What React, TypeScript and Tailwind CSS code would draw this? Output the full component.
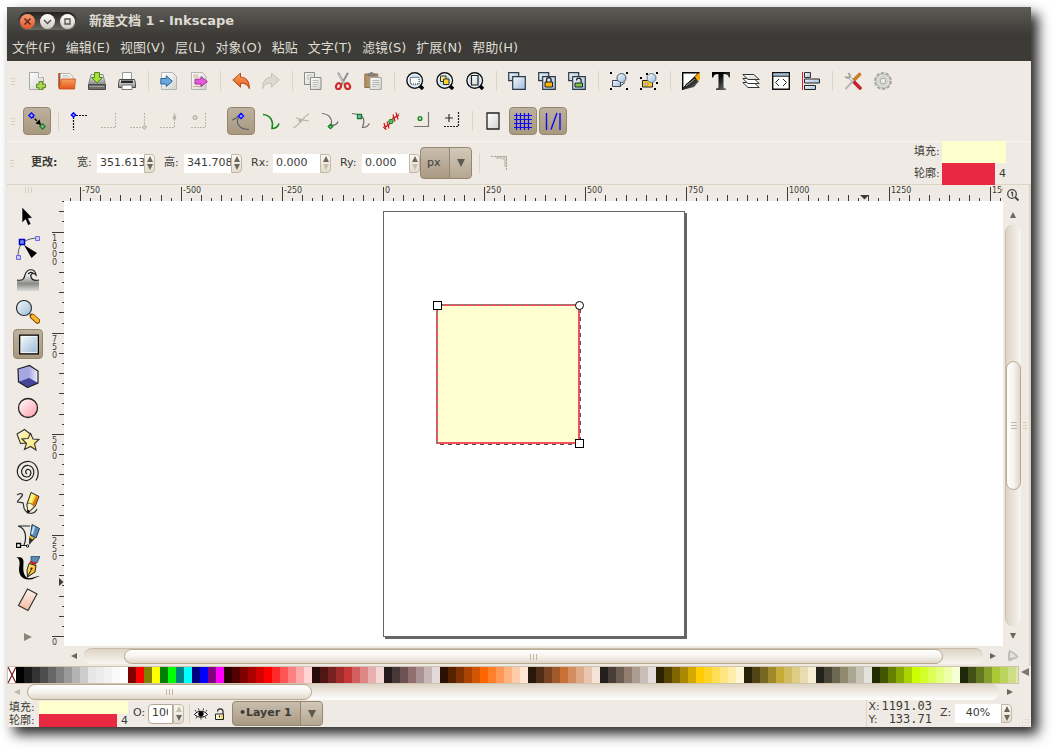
import type { ReactNode } from "react";
import clsx from "clsx";

type Tool = { label: string; icon: ReactNode; active?: boolean };
type ToolItem = Tool | "line" | "space";

/* shared fills for the icons */
function Gradients() {
  return (
    <svg className="absolute size-0" aria-hidden="true">
      <defs>
        <linearGradient id="blue" x1="0" y1="0" x2="1" y2="1">
          <stop offset="0" stopColor="#f4f8fc" />
          <stop offset="1" stopColor="#9dbcd9" />
        </linearGradient>
        <linearGradient id="paper" x1="0" y1="0" x2="1" y2="1">
          <stop offset="0" stopColor="#ffffff" />
          <stop offset="1" stopColor="#d2d2ce" />
        </linearGradient>
        <linearGradient id="orange" x1="0" y1="0" x2="0" y2="1">
          <stop offset="0" stopColor="#f9a15c" />
          <stop offset="1" stopColor="#e2571c" />
        </linearGradient>
        <linearGradient id="grey" x1="0" y1="0" x2="0" y2="1">
          <stop offset="0" stopColor="#f2f2f0" />
          <stop offset="1" stopColor="#8a8a88" />
        </linearGradient>
        <linearGradient id="wave" x1="0" y1="0" x2="0" y2="1">
          <stop offset="0.2" stopColor="#f2f2f0" />
          <stop offset="0.65" stopColor="#8a8a88" />
          <stop offset="1" stopColor="#dcdcda" />
        </linearGradient>
        <linearGradient id="gold" x1="0" y1="0" x2="1" y2="1">
          <stop offset="0" stopColor="#fff27a" />
          <stop offset="1" stopColor="#f59b00" />
        </linearGradient>
        <linearGradient id="yellow" x1="0" y1="0" x2="1" y2="1">
          <stop offset="0" stopColor="#fffef0" />
          <stop offset="1" stopColor="#fbe04e" />
        </linearGradient>
        <linearGradient id="pink" x1="0" y1="0" x2="1" y2="1">
          <stop offset="0.1" stopColor="#fff6f6" />
          <stop offset="1" stopColor="#ff9aa8" />
        </linearGradient>
        <linearGradient id="peach" x1="0" y1="0" x2="0" y2="1">
          <stop offset="0" stopColor="#fdf3ee" />
          <stop offset="1" stopColor="#f5b8a0" />
        </linearGradient>
        <linearGradient id="violet" x1="0" y1="0" x2="1" y2="0">
          <stop offset="0" stopColor="#a9a9e0" />
          <stop offset="1" stopColor="#f0f0ff" />
        </linearGradient>
        <linearGradient id="ink" x1="0" y1="0" x2="1" y2="1">
          <stop offset="0.3" stopColor="#000000" />
          <stop offset="1" stopColor="#888888" />
        </linearGradient>
      </defs>
    </svg>
  );
}

function Icon({ children }: { children: ReactNode }) {
  return (
    <svg viewBox="0 0 18 18" className="size-[18px]" fill="none" aria-hidden="true">
      {children}
    </svg>
  );
}

function BigIcon({ children }: { children: ReactNode }) {
  return (
    <svg viewBox="0 0 24 24" className="size-6" fill="none" aria-hidden="true">
      {children}
    </svg>
  );
}

function Lens({ children }: { children: ReactNode }) {
  return (
    <Icon>
      <path d="M13 13l4 4" stroke="#000" strokeWidth="3.500" />
      <circle cx="8.700" cy="8.500" r="7.800" fill="#c5dcf0" stroke="#111" strokeWidth="1.400" />
      <circle cx="8.700" cy="8.500" r="6.400" stroke="#fff" strokeWidth="0.800" />
      {children}
    </Icon>
  );
}

function Stacked({ children }: { children?: ReactNode }) {
  return (
    <Icon>
      <path d="M.7.700h10v8h-10z" fill="url(#blue)" stroke="#2c3a48" strokeWidth="1.200" />
      <path d="M4.700 4.700h12.600v12.600H4.700z" fill="url(#blue)" stroke="#2c3a48" strokeWidth="1.200" />
      {children}
    </Icon>
  );
}

const blueNode = "M-2.2 0L0-2.2 2.2 0 0 2.2z";

const commandTools: ToolItem[] = [
  {
    label: "新建",
    icon: (
      <Icon>
        <path d="M1.500.5h9l5 5v12h-14z" fill="url(#paper)" stroke="#a8a8a4" />
        <path d="M10.500.5v5h5" fill="#fff" stroke="#b5b5b1" />
        <path d="M11 9.500h3.500v2.700h3v3.500h-3v2h-3.500v-2H8.500v-3.500H11z" fill="#a9d653" stroke="#5c8a1c" />
      </Icon>
    ),
  },
  {
    label: "打开",
    icon: (
      <Icon>
        <path d="M.8 1.500h5l1 2h3v12H.8z" fill="#c9542a" stroke="#a34c2a" />
        <path d="M2.500 1.500h9l3.500 3v7H2.500z" fill="#f6f6f4" stroke="#b5b0a8" />
        <path d="M4.500 5h8M4.500 3.500h6" stroke="#c9c9c5" />
        <path d="M3.500 7h14l-1 10H1z" fill="url(#orange)" stroke="#c04d16" strokeWidth="0.800" />
      </Icon>
    ),
  },
  {
    label: "保存",
    icon: (
      <Icon>
        <path d="M3 2.500h12l2.500 10H.5z" fill="url(#grey)" stroke="#777" strokeWidth="0.800" />
        <path d="M.5 12.500h17v5H.5z" fill="#6e6e6c" stroke="#4a4a48" />
        <path d="M2 14.500h14" stroke="#bbb" strokeDasharray="1 .6" />
        <path d="M6.500.5h5v5h3L9 11 3.500 5.500h3z" fill="#a7e03a" stroke="#4f8b12" />
      </Icon>
    ),
  },
  {
    label: "打印",
    icon: (
      <Icon>
        <path d="M4.500.5h9v7h-9z" fill="#fafafa" stroke="#999" />
        <path d="M1.500 7.500h15l1 4v4H.5v-4z" fill="url(#grey)" stroke="#4a4a48" />
        <path d="M3 8.500h12v2.500H3z" fill="#2a2a2a" />
        <path d="M4 13h10v4.500H4z" fill="#fff" stroke="#777" />
      </Icon>
    ),
  },
  "line",
  {
    label: "导入",
    icon: (
      <Icon>
        <path d="M1.500.5h11l4 4v13h-15z" fill="url(#paper)" stroke="#b5b5b1" />
        <path d="M.8 6.500h5.500V3.800l6 5.400-6 5.300V12H.8z" fill="#6ba6dc" stroke="#2b659c" />
      </Icon>
    ),
  },
  {
    label: "导出",
    icon: (
      <Icon>
        <path d="M1.500.5h11l3.500 4v13H1.500z" fill="url(#paper)" stroke="#b5b5b1" />
        <path d="M3 3h5M3 5h6M3 14.500h9" stroke="#d7a68f" />
        <path d="M5 7.200h6V4.600l6.400 5-6.400 5V12H5z" fill="#e45bd7" stroke="#a3359a" />
      </Icon>
    ),
  },
  "line",
  {
    label: "撤销",
    icon: (
      <Icon>
        <path d="M.8 8L8.500 1.200v4c6 0 9 4 8.800 11.500-1.500-4-4-5.500-8.800-5.500v4z" fill="url(#orange)" stroke="#b84716" />
      </Icon>
    ),
  },
  {
    label: "重做",
    icon: (
      <Icon>
        <path d="M17.200 8L9.500 1.200v4c-6 0-9 4-8.800 11.500 1.500-4 4-5.500 8.800-5.500v4z" fill="#dcd9d1" stroke="#c4c0b6" />
      </Icon>
    ),
  },
  "line",
  {
    label: "复制",
    icon: (
      <Icon>
        <path d="M.5.5h10v12H.5z" fill="url(#paper)" stroke="#8b8b88" />
        <path d="M6.500 5.500h10.500v12H6.500z" fill="url(#paper)" stroke="#8b8b88" />
        <path d="M2.500 3h6M2.500 5h3M2.500 7h3M8.500 8.500h6M8.500 10.500h6M8.500 12.500h5M8.500 14.500h4" stroke="#bdbdb9" />
      </Icon>
    ),
  },
  {
    label: "剪切",
    icon: (
      <Icon>
        <path d="M4 .8l6.500 11.500M14 .8L7.500 12.300" stroke="#8b8f93" strokeWidth="2" />
        <path d="M4.200 1.500l6 10.500" stroke="#eee" strokeWidth="0.700" />
        <ellipse cx="4.500" cy="14.200" rx="2.400" ry="3" stroke="#cf2a2a" strokeWidth="2.200" transform="rotate(25 4.500 14.200)" />
        <ellipse cx="13.500" cy="14.200" rx="2.400" ry="3" stroke="#cf2a2a" strokeWidth="2.200" transform="rotate(-25 13.500 14.200)" />
      </Icon>
    ),
  },
  {
    label: "粘贴",
    icon: (
      <Icon>
        <path d="M.8 2h13v13.500H.8z" fill="#b49167" stroke="#8f6f48" />
        <path d="M4 3.500V2h1.500L6.500.5h2l1 1.500H11v1.500z" fill="#888" stroke="#666" strokeWidth="0.600" />
        <path d="M6 5.500h11.300v12H6z" fill="url(#paper)" stroke="#a5a5a1" />
        <path d="M8 8.500h7M8 10.500h7M8 12.500h7M8 14.500h4" stroke="#b9b9b5" />
      </Icon>
    ),
  },
  "line",
  {
    label: "缩放到选区",
    icon: (
      <Lens>
        <path d="M4.500 5.500h8.500v6.500H4.500z" fill="#fff" stroke="#222" strokeDasharray="1 1" />
      </Lens>
    ),
  },
  {
    label: "缩放到绘图",
    icon: (
      <Lens>
        <path d="M4.500 4h5.500v5.500H4.500z" fill="#ffe680" stroke="#333" />
        <path d="M7.500 7h5.500v5.500H7.500z" fill="#ffd42a" stroke="#333" />
      </Lens>
    ),
  },
  {
    label: "缩放到页面",
    icon: (
      <Lens>
        <path d="M5.500 3.500h6.500v9.500H5.500z" fill="url(#paper)" stroke="#222" strokeWidth="1.200" />
      </Lens>
    ),
  },
  "line",
  { label: "再制", icon: <Stacked /> },
  {
    label: "克隆",
    icon: (
      <Stacked>
        <path d="M8.500 10V8a2.300 2.300 0 014.600 0v2" stroke="#222" strokeWidth="1.300" />
        <path d="M7 10h7.500v5H7z" fill="#ffb000" stroke="#222" />
      </Stacked>
    ),
  },
  {
    label: "断开克隆",
    icon: (
      <Stacked>
        <path d="M8.500 8.500a2.300 2.300 0 014.600 0v2" stroke="#222" strokeWidth="1.300" />
        <path d="M7 11h7.500v4H7z" fill="#7fc34a" stroke="#222" />
      </Stacked>
    ),
  },
  "line",
  {
    label: "群组",
    icon: (
      <Icon>
        <path d="M0 0h2v2H0zM16 0h2v2h-2zM0 16h2v2H0zM16 16h2v2h-2z" fill="#000" />
        <path d="M2.500 8.500h8v6h-8z" fill="url(#blue)" stroke="#445" />
        <circle cx="11.500" cy="6" r="4.500" fill="url(#blue)" stroke="#4a5a6a" />
        <path d="M9 15l6-4.500" stroke="#445" />
      </Icon>
    ),
  },
  {
    label: "取消群组",
    icon: (
      <Icon>
        <path d="M0 5h2v2H0zM6 1h2v2H6zM16 0h2v2h-2zM0 16h2v2H0zM14 16h2v2h-2zM16 10h2v2h-2z" fill="#000" />
        <path d="M2.500 8.500h10v6.500h-10z" fill="#ffcc2a" stroke="#222" />
        <path d="M5 11h3v2H5z" fill="#fff" stroke="#555" strokeWidth="0.600" />
        <circle cx="11.500" cy="6" r="4.500" fill="url(#blue)" stroke="#667788" />
      </Icon>
    ),
  },
  "line",
  {
    label: "填充和轮廓",
    icon: (
      <Icon>
        <path d="M.7.700h16.500L.7 17.300z" fill="#fff" stroke="#000" strokeWidth="1.400" />
        <path d="M0 18l4-6 9-7 4 4-5 6z" fill="url(#ink)" />
        <path d="M4 14l9-7" stroke="#aaa" />
        <path d="M13 4.500L18 0v7l-2 2.500z" fill="#f5a800" />
      </Icon>
    ),
  },
  {
    label: "文字",
    icon: (
      <Icon>
        <path d="M0 0h18v5.500h-1.200C16.300 3 15 2 11.500 2v12.500c0 1.500.8 2 2.500 2V18H4v-1.500c1.700 0 2.500-.5 2.500-2V2C3 2 1.700 3 1.200 5.500H0z" fill="url(#ink)" />
      </Icon>
    ),
  },
  {
    label: "图层",
    icon: (
      <Icon>
        <path d="M.8 10.500h11l5.500 5H6z" fill="#fff" stroke="#333" />
        <path d="M.8 6.500h11l5.500 5H6z" fill="#fff" stroke="#333" />
        <path d="M.8 2.500h11l5.500 5H6z" fill="url(#paper)" stroke="#333" />
      </Icon>
    ),
  },
  {
    label: "XML 编辑器",
    icon: (
      <Icon>
        <path d="M.7.700h16.600v16.600H.7z" fill="#fff" stroke="#111" strokeWidth="1.400" />
        <path d="M1.500 1.500h15v2.300h-15z" fill="#9dbbd8" />
        <path d="M1 4.200h16" stroke="#111" />
        <path d="M7 7l-3.500 3.500L7 14M11 7l3.500 3.500L11 14" stroke="#222" />
      </Icon>
    ),
  },
  {
    label: "对齐",
    icon: (
      <Icon>
        <path d="M.5 0v18" stroke="#e01b24" />
        <path d="M2.500.5h6v5h-6z" fill="url(#blue)" stroke="#333" />
        <path d="M2.500 7h15v4h-15z" fill="url(#blue)" stroke="#222" />
        <path d="M2.500 13.500h11v4h-11z" fill="url(#blue)" stroke="#222" />
      </Icon>
    ),
  },
  "line",
  {
    label: "首选项",
    icon: (
      <Icon>
        <path d="M15.500 2.500L9 9" stroke="#d07c22" strokeWidth="3.600" strokeLinecap="round" />
        <path d="M4 4l7 7" stroke="#8f9397" strokeWidth="2.800" />
        <path d="M4 4l6 6" stroke="#f0f0f0" strokeWidth="1.400" />
        <path d="M1 4.500l2 1.500 2.500-.8L6 3 4.500 1" stroke="#999" strokeWidth="1.500" />
        <path d="M10.500 10.500l5.500 5.500" stroke="#c8202a" strokeWidth="3.600" strokeLinecap="round" />
        <path d="M8.500 9.500L2 16.500" stroke="#b5b5b5" strokeWidth="2" strokeLinecap="round" />
      </Icon>
    ),
  },
  {
    label: "文档属性",
    icon: (
      <Icon>
        <circle cx="9" cy="9" r="7.900" stroke="#a5a5a2" strokeWidth="2" strokeDasharray="3.500 1.460" />
        <circle cx="9" cy="9" r="7" fill="#dededb" stroke="#b5b5b2" />
        <circle cx="9" cy="9" r="2.800" fill="#efebe4" stroke="#a5a5a2" />
        <circle cx="9" cy="9" r="4.500" stroke="#cbcbc8" />
      </Icon>
    ),
  },
];

const snapTools: ToolItem[] = [
  {
    label: "启用捕捉",
    active: true,
    icon: (
      <Icon>
        <path d="M3.500 3.500L13 13" stroke="#000" strokeWidth="1.500" strokeDasharray="3 1.500" />
        <path d="M13 13l-5.500-1.500 4-4z" fill="#000" />
        <path d={blueNode} transform="translate(3.500 3.500) scale(1.200)" fill="#8fa6ff" stroke="#00f" />
        <path d={blueNode} transform="translate(14.500 14.500) scale(1.200)" fill="#9aa" stroke="#12801a" />
      </Icon>
    ),
  },
  "line",
  {
    label: "捕捉边界框",
    icon: (
      <Icon>
        <path d="M3.500 5v13M6 3.500h12" stroke="#111" strokeWidth="1.200" strokeDasharray="2 1" />
        <path d={blueNode} transform="translate(3.500 3)" fill="#8fa6ff" stroke="#00f" strokeWidth="1.300" />
      </Icon>
    ),
  },
  {
    label: "捕捉边框边缘",
    icon: (
      <Icon>
        <path d="M15.500 1v15M1 15.500h15" stroke="#b9b5ac" strokeDasharray="2 1" />
      </Icon>
    ),
  },
  {
    label: "捕捉边框角",
    icon: (
      <Icon>
        <path d="M14.500 1v14M0 15.500h14" stroke="#b9b5ac" strokeDasharray="2 1" />
        <path d={blueNode} transform="translate(14.500 15.200)" fill="#d5d1c8" stroke="#b0aca3" />
      </Icon>
    ),
  },
  {
    label: "捕捉边框中点",
    icon: (
      <Icon>
        <path d="M14.500 1v14.500H0" stroke="#b9b5ac" strokeDasharray="2 1" />
        <ellipse cx="14.500" cy="5.500" rx="1.800" ry="2.300" fill="#b9b5ac" />
      </Icon>
    ),
  },
  {
    label: "捕捉边框中心",
    icon: (
      <Icon>
        <path d="M15.500 1v14.500H1" stroke="#b9b5ac" strokeDasharray="2 1" />
        <circle cx="5" cy="5.500" r="1.800" stroke="#b9b5ac" strokeWidth="1.400" />
      </Icon>
    ),
  },
  "space",
  {
    label: "捕捉节点",
    active: true,
    icon: (
      <Icon>
        <path d="M0 8c4 0 4-4 9-4.500M9 4C3 7 4 17 17 17.500" stroke="#5c6068" strokeWidth="1.200" />
        <path d={blueNode} transform="translate(9 4) scale(1.200)" fill="#8fa6ff" stroke="#00f" />
      </Icon>
    ),
  },
  {
    label: "捕捉路径",
    icon: (
      <Icon>
        <path d="M1 2.500c6 .5 11 5 9 14 3.500 0 6-2 7-5" stroke="#138a1c" strokeWidth="1.600" />
      </Icon>
    ),
  },
  {
    label: "捕捉路径交点",
    icon: (
      <Icon>
        <path d="M1 16C8 13 9 7 17 1.500M4 5.500c3 2 8 3 13 3.500" stroke="#bab6ad" strokeWidth="1.200" />
        <circle cx="8.500" cy="8.500" r="2" fill="#bab6ad" />
      </Icon>
    ),
  },
  {
    label: "捕捉尖角节点",
    icon: (
      <Icon>
        <path d="M0 1.500c7 .5 11 5 9 12 3.500 0 6-1 7-4" stroke="#6b6b6b" strokeWidth="1.200" />
        <path d={blueNode} transform="translate(8.500 14.500)" fill="#9fd3a3" stroke="#12801a" strokeWidth="1.300" />
      </Icon>
    ),
  },
  {
    label: "捕捉平滑节点",
    icon: (
      <Icon>
        <path d="M0 1.500l6 1c6 1 7 6 4.500 13 3.500 0 5.500-1 7-4" stroke="#6b6b6b" strokeWidth="1.200" />
        <path d="M5.500 2.500h4v4h-4z" fill="#8cb4ff" stroke="#12801a" strokeWidth="1.300" />
      </Icon>
    ),
  },
  {
    label: "捕捉线段中点",
    icon: (
      <Icon>
        <path d="M2 17L17 1.500" stroke="#555" />
        <path d="M2 11l2 7M5 9.500l2 7M11 2.500l2 7M14 .5l2 7M1 15.500l7-3M10 6.500l7-3" stroke="#d41515" strokeWidth="1.200" />
        <circle cx="9" cy="9.500" r="2.200" fill="#6bb56f" stroke="#12801a" />
      </Icon>
    ),
  },
  {
    label: "捕捉对象中心",
    icon: (
      <Icon>
        <path d="M16.500 0v14.500H2" stroke="#777" strokeWidth="1.200" />
        <circle cx="8" cy="6.500" r="1.900" fill="#bfe0c1" stroke="#12801a" strokeWidth="1.300" />
      </Icon>
    ),
  },
  {
    label: "捕捉旋转中心",
    icon: (
      <Icon>
        <path d="M16.500 0v15M2 14.500h15" stroke="#222" strokeWidth="1.200" strokeDasharray="2 1" />
        <path d="M7 2v8M3 6h8" stroke="#333" strokeWidth="1.200" />
      </Icon>
    ),
  },
  "line",
  {
    label: "捕捉页面边框",
    icon: (
      <Icon>
        <path d="M3 1h12v16H3z" fill="url(#paper)" stroke="#222" strokeWidth="1.300" />
      </Icon>
    ),
  },
  {
    label: "捕捉网格",
    active: true,
    icon: (
      <Icon>
        <path d="M2.500 1v17M6.500 1v17M10.500 1v17M14.500 1v17M0 3.500h18M0 7.500h18M0 11.500h18M0 15.500h18" stroke="#0b0bf0" strokeWidth="1.200" />
      </Icon>
    ),
  },
  {
    label: "捕捉参考线",
    active: true,
    icon: (
      <Icon>
        <path d="M2.500 1v17M16 1v17M7 17.500l6-16.500" stroke="#0b0bf0" strokeWidth="1.400" />
      </Icon>
    ),
  },
];

const drawTools: Tool[] = [
  {
    label: "选择",
    icon: (
      <BigIcon>
        <path d="M6 3v16l3.500-3.500 2.500 6 3-1.500-2.700-5.500 4.200-.5z" fill="#000" stroke="#fff" strokeWidth="0.600" />
      </BigIcon>
    ),
  },
  {
    label: "节点",
    icon: (
      <BigIcon>
        <path d="M2 21C2 10 6 3 21 2" stroke="#555" />
        <path d="M3.500 3.500h5v5h-5z" fill="#7a8cf0" stroke="#0000c8" strokeWidth="1.500" />
        <path d="M.5 19.500h4v4h-4zM19.500.5h4v4h-4z" fill="#c8ccff" stroke="#6a6ae8" />
        <path d="M8 9l13 8-5.500 5z" fill="#000" />
      </BigIcon>
    ),
  },
  {
    label: "调整",
    icon: (
      <BigIcon>
        <path d="M1 12c6 1 7-1 8-5 2-6 10-7 11 0-2-2-5-1-4 2 0 3 3 4 7 3v11H1z" fill="url(#wave)" />
        <path d="M1 12c6 1 7-1 8-5 2-7 10-7 11 0-3-3-6-1-5 2s4 4 8 3M12 6c2-2 4-2 5-.5" stroke="#222" strokeWidth="1.200" />
      </BigIcon>
    ),
  },
  {
    label: "缩放",
    icon: (
      <BigIcon>
        <path d="M14 14l3 3" stroke="#777" strokeWidth="3" />
        <path d="M16.500 16.500l5 4.500" stroke="#7a4b00" strokeWidth="5.500" strokeLinecap="round" />
        <path d="M16.800 16.600l4.500 4.100" stroke="#ffb62a" strokeWidth="3.800" strokeLinecap="round" />
        <circle cx="8" cy="8" r="7.500" fill="url(#blue)" stroke="#333" strokeWidth="1.200" />
      </BigIcon>
    ),
  },
  {
    label: "矩形",
    active: true,
    icon: (
      <BigIcon>
        <path d="M3.700 3.200h18.600v18.600H3.700z" fill="#fff" stroke="#000" strokeWidth="1.300" />
        <path d="M5.200 4.700h15.600v15.600H5.200z" fill="url(#blue)" />
      </BigIcon>
    ),
  },
  {
    label: "3D 盒子",
    icon: (
      <BigIcon>
        <path d="M2 5l11.500-3.500L22 7v12l-10.500 4.500L2.500 18z" fill="#8585cc" />
        <path d="M13 2v12l-10.500 4L2 5z" fill="#a6a6e2" />
        <path d="M13 2l9 5v12l-9-5z" fill="url(#violet)" />
        <path d="M13 14l9 5-10.500 4.500-9-5.500z" fill="#45459a" />
        <path d="M2 5l11.500-3.500L22 7v12l-10.500 4.500L2.500 18z" stroke="#222" strokeWidth="1.200" />
      </BigIcon>
    ),
  },
  {
    label: "椭圆",
    icon: (
      <BigIcon>
        <circle cx="12" cy="12" r="9.500" fill="url(#pink)" stroke="#222" strokeWidth="1.300" />
      </BigIcon>
    ),
  },
  {
    label: "星形",
    icon: (
      <BigIcon>
        <path d="M1 6l7.500-4.500 6.500 5-2 8.500-8.500.5z" fill="url(#yellow)" stroke="#333" strokeWidth="1.100" />
        <path d="M14.500 5.500l2.500 5.500 6 .5-4.500 4 1.500 6.500-5.500-3.500-6 3 2-6-4.500-4.500 6-.5z" fill="url(#yellow)" stroke="#333" strokeWidth="1.100" />
      </BigIcon>
    ),
  },
  {
    label: "螺旋",
    icon: (
      <BigIcon>
        <path
          d="M11 14c-2.500-1.500-1-5.500 2-4.500 3 1.500 2.500 7-2 7.500-5 0-6.500-5-4.500-8.500C9 4 16 4.500 17.500 10c1.500 6-3 11-8 10.500C3.500 19.500.5 15 1.500 9.500 2.500 4 8 1 13.500 1.500c8 1.500 11 12 6.500 19"
          stroke="#222"
          strokeWidth="1.200"
        />
      </BigIcon>
    ),
  },
  {
    label: "铅笔",
    icon: (
      <BigIcon>
        <path d="M1 3c2-1.500 6-2 5.500 0S2 8 1.500 9.500 6 10 7 11s0 5 2 7c3 5 10 4 12-1" stroke="#333" strokeWidth="1.200" />
        <path d="M15 .5l8 4-4 10-7 6.500-1-9z" fill="url(#gold)" stroke="#222" />
        <path d="M15.500 1.500l3 1.500-3.500 9-3 .500z" fill="#fff27a" />
        <path d="M20.500 4l2 1-4 9-2.500-1.500z" fill="#d97e00" />
        <path d="M11 12c2-1.500 5-.5 7 2.500L12 21z" fill="#fff3cc" stroke="#222" strokeWidth="0.700" />
        <path d="M11.500 17.500l2.500 1.500-2.500 3z" fill="#000" />
      </BigIcon>
    ),
  },
  {
    label: "钢笔",
    icon: (
      <BigIcon>
        <path d="M2 2h12M2 2c8 2 9 12 6 19M4 21.500h7" stroke="#222" strokeWidth="1.200" />
        <path d="M.5 19.500h4v4h-4z" fill="#fff" stroke="#000" strokeWidth="1.300" />
        <circle cx="11.500" cy="22" r="1.200" fill="#fff" stroke="#000" />
        <path d="M16 .5l7.500 4-3.500 9.500-5.500-3z" fill="#5b8cb8" stroke="#1f3c5a" />
        <path d="M18 2.500L16 10" stroke="#c7dff2" strokeWidth="2" />
        <path d="M14 11l5 3.500-6 6.500v-6z" fill="#333" />
        <path d="M14 11.500l4 2.500-1.500 1.500-3-2z" fill="#ffc222" />
      </BigIcon>
    ),
  },
  {
    label: "书法",
    icon: (
      <BigIcon>
        <path d="M0 1.500c5-1 8 0 7.500 6S7 20 12 22c4 1 8-2 12-2-4 1-7 4-12 3.500C4 22.500 2 17 3.500 9 4 5 3 2 0 1.500z" fill="#000" />
        <path d="M15 .5h9l-3 6.500-6-1.500z" fill="#5b8cb8" stroke="#1f3c5a" strokeWidth="0.700" />
        <path d="M14 5l6.500 2-1 2-6-2z" fill="#d51c1c" />
        <path d="M13 7.500l7 2-1 6.500-7.500 5-.5-7z" fill="url(#gold)" stroke="#222" />
        <path d="M12 20l3.500-7" stroke="#222" />
        <circle cx="15.500" cy="12.500" r="1.100" fill="#222" />
      </BigIcon>
    ),
  },
  {
    label: "橡皮擦",
    icon: (
      <BigIcon>
        <path d="M11.500 1l9.500 5-9 16.500-9.500-5z" fill="url(#peach)" stroke="#333" strokeWidth="1.200" />
      </BigIcon>
    ),
  },
];

const menus = ["文件(F)", "编辑(E)", "视图(V)", "层(L)", "对象(O)", "粘贴", "文字(T)", "滤镜(S)", "扩展(N)", "帮助(H)"];

const palette = (
  "000000 1a1a1a 333333 4d4d4d 666666 808080 999999 b3b3b3 cccccc e6e6e6 ececec f2f2f2 f9f9f9 ffffff " +
  "800000 ff0000 808000 ffff00 008000 00ff00 008080 00ffff 000080 0000ff 800080 ff00ff " +
  "2b0000 550000 800000 aa0000 d40000 ff0000 ff2a2a ff5555 ff8080 ffaaaa ffd5d5 " +
  "280b0b 501616 782121 a02c2c c83737 d35f5f de8787 e9afaf f4d7d7 " +
  "241c1c 483737 6c5353 916f6f ac9393 c8b7b7 e3dbdb " +
  "2b1100 552200 803300 aa4400 d45500 ff6600 ff7f2a ff9955 ffb380 ffccaa ffe6d5 " +
  "28170b 502d16 784421 a05a2c c87137 d38d5f deaa87 e9c6af f4e3d7 " +
  "241f1c 483e37 6c5d53 917c6f ac9d93 c8beb7 e3dedb " +
  "2b2200 554400 806600 aa8800 d4aa00 ffcc00 ffd42a ffdd55 ffe680 ffeeaa fff6d5 " +
  "28220b 504416 786721 a0892c c8ab37 d3bc5f decd87 e9ddaf f4eed7 " +
  "24221c 484537 6c6753 918a6f aca793 c8c4b7 e3e2db " +
  "222b00 445500 668000 88aa00 aad400 ccff00 d4ff2a ddff55 e5ff80 eeffaa f6ffd5 " +
  "20280b 425016 647821 86a02c abc837 bcd35f cdde87 dde9af"
).split(" ");

const arrowPaths = {
  up: "M0 7L3.500 0 7 7z",
  down: "M0 0h7L3.500 7z",
  left: "M7 0v7L0 3.500z",
  right: "M0 0l7 3.500L0 7z",
};

function Arrow({ dir, className }: { dir: keyof typeof arrowPaths; className?: string }) {
  return (
    <svg viewBox="0 0 7 7" className={clsx("shrink-0", className)} fill="currentColor" aria-hidden="true">
      <path d={arrowPaths[dir]} />
    </svg>
  );
}

/* the three small lines on bars and scroll thumbs */
function Grip({ vertical, light }: { vertical?: boolean; light?: boolean }) {
  const line = light ? "bg-[#d9d0bd]" : "bg-[#c3b7a3]";
  return (
    <span className={clsx("flex shrink-0 gap-0.5", vertical ? "flex-row" : "flex-col")}>
      {[0, 1, 2].map((i) => (
        <span key={i} className={clsx(line, vertical ? "h-1.5 w-px" : light ? "h-px w-1" : "h-px w-1.5")} />
      ))}
    </span>
  );
}

function Separator({ blank }: { blank?: boolean }) {
  return (
    <span className="flex h-5 w-2.5 justify-center">
      {!blank && <span className="w-px bg-[#dcd5c7]" />}
    </span>
  );
}

function ToolButton({ tool, big }: { tool: Tool; big?: boolean }) {
  return (
    <button
      type="button"
      aria-label={tool.label}
      aria-pressed={tool.active}
      className={clsx(
        "flex shrink-0 items-center justify-center",
        big ? "size-[30px]" : "size-7",
        tool.active && "rounded border border-[#94866f] bg-linear-to-b from-[#bdb09f] to-[#a8987f]"
      )}
    >
      {tool.icon}
    </button>
  );
}

function Toolbar({ label, tools }: { label: string; tools: ToolItem[] }) {
  return (
    <div role="toolbar" aria-label={label} className="flex h-10 shrink-0 items-center">
      <span className="flex w-4 justify-center pr-1">
        <Grip light />
      </span>
      <div className="flex items-center gap-0.5">
        {tools.map((tool, i) =>
          typeof tool === "string" ? <Separator key={i} blank={tool === "space"} /> : <ToolButton key={i} tool={tool} />
        )}
      </div>
    </div>
  );
}

function Stepper({ label, minDim, maxDim }: { label: string; minDim?: boolean; maxDim?: boolean }) {
  return (
    <span className="flex w-[11px] flex-col rounded-r border border-[#c4b8a4] bg-linear-to-b from-[#faf8f4] to-[#e3dccf]">
      <button type="button" aria-label={`增加${label}`} className={clsx("flex flex-1 items-center justify-center", maxDim ? "text-[#c9bfad]" : "text-[#6b675f]")}>
        <Arrow dir="up" className="size-[6px]" />
      </button>
      <button type="button" aria-label={`减少${label}`} className={clsx("flex flex-1 items-center justify-center", minDim ? "text-[#c9bfad]" : "text-[#6b675f]")}>
        <Arrow dir="down" className="size-[6px]" />
      </button>
    </span>
  );
}

function NumberField({ label, value, id, wide, minDim }: { label: string; value: string; id: string; wide?: boolean; minDim?: boolean }) {
  return (
    <div className="flex items-center">
      <label htmlFor={id} className={clsx("whitespace-nowrap", wide ? "w-[22px]" : "w-5")}>
        {label}:
      </label>
      <div className="flex h-[19px]">
        <input id={id} defaultValue={value} className="w-[47px] bg-white pl-[3px] outline-none" />
        <Stepper label={label} minDim={minDim} />
      </div>
    </div>
  );
}

function Combo({ label, value, className, bold }: { label: string; value: string; className: string; bold?: boolean }) {
  return (
    <div className={clsx("relative rounded border border-[#94866f] bg-linear-to-b from-[#c9bdad] to-[#a99a83]", className)}>
      <select aria-label={label} className={clsx("size-full appearance-none pl-1.5 outline-none", bold && "font-bold")}>
        <option>{value}</option>
      </select>
      <span className="pointer-events-none absolute inset-y-0 right-0 flex w-[22px] items-center justify-center rounded-r border-l border-[#94866f] bg-linear-to-b from-[#d3c9ba] to-[#b5a792] text-[#5f5a50]">
        <Arrow dir="down" className="size-2" />
      </span>
    </div>
  );
}

/* one tick for every 25 px of the drawing */
const ticks = Array.from({ length: 93 }, (_, i) => i - 31);

function HorizontalRuler() {
  return (
    <svg className="block h-4 w-full text-[8px]" aria-hidden="true">
      {ticks.map((k) => {
        const x = Math.round(319 + k * 10.11);
        const top = k % 10 === 0 ? 2 : k % 2 === 0 ? 10 : 13;
        return <rect key={k} x={x} y={top} width="1" height={16 - top} fill="#3c3b37" />;
      })}
      {ticks
        .filter((k) => k % 10 === 0)
        .map((k) => (
          <text key={k} x={Math.round(321 + k * 10.11)} y="8" fill="#3c3b37">
            {k * 25}
          </text>
        ))}
      <path d="M796 10h9l-4.500 4.500z" fill="#3c3b37" />
    </svg>
  );
}

function VerticalRuler() {
  const steps = ticks.filter((k) => k >= 0 && k < 44);
  return (
    <svg className="block h-full w-[15px] shrink-0 text-[8px]" aria-hidden="true">
      {steps.map((k) => {
        const left = k % 10 === 0 ? 3 : k % 2 === 0 ? 10 : 13;
        return <rect key={k} x={left} y={Math.round(435 - k * 10.11)} width={15 - left} height="1" fill="#3c3b37" />;
      })}
      {steps
        .filter((k) => k % 10 === 0)
        .map((k) =>
          String(k * 25)
            .split("")
            .map((digit, i) => (
              <text key={`${k}-${i}`} x="3" y={Math.round(444 - k * 10.11) + i * 8} fill="#3c3b37">
                {digit}
              </text>
            ))
        )}
      <path d="M10 377v8l4.500-4z" fill="#3c3b37" />
    </svg>
  );
}

function Canvas() {
  return (
    <svg className="block h-full min-w-0 flex-1 bg-white" role="img" aria-label="画布" shapeRendering="crispEdges">
      {/* page with its drop shadow */}
      <rect x="321" y="12" width="302" height="426" fill="#666" />
      <rect x="319.500" y="10.500" width="301" height="425" fill="#fff" stroke="#666" />
      {/* drawn rectangle */}
      <rect x="373" y="104" width="142" height="138" fill="#fffed0" stroke="#f0505c" strokeWidth="2" />
      <path d="M372.500 243V103.500H515" fill="none" stroke="#5f9090" strokeDasharray="4 4" />
      <path d="M516.500 108v135.500H372" fill="none" stroke="#555" strokeDasharray="4 4" />
      <rect x="369.500" y="100.500" width="8" height="8" fill="#fff" stroke="#000" />
      <rect x="511.500" y="238.500" width="8" height="8" fill="#fff" stroke="#000" />
      <circle cx="515.500" cy="104.500" r="4" fill="#fff" stroke="#000" shapeRendering="auto" />
    </svg>
  );
}

const thumbH = "flex items-center justify-center rounded-full border border-[#b8a98f] bg-linear-to-b from-white via-[#f6f3ee] to-[#dfd7c9]";

function StyleIndicator({ className, row, label, yellow, red }: { className: string; row: string; label: string; yellow: string; red: string }) {
  return (
    <div className={clsx("shrink-0", className)}>
      <div className={clsx("flex", row)}>
        <span className={clsx("shrink-0", label)}>填充:</span>
        <span className={clsx("bg-[#ffffcd]", yellow)} />
      </div>
      <div className={clsx("flex", row)}>
        <span className={clsx("shrink-0", label)}>轮廓:</span>
        <span className={clsx("bg-[#e92941]", red)} />
        <span className="ml-1">4</span>
      </div>
    </div>
  );
}

export default function App() {
  return (
    <div className="h-screen w-full bg-white pt-[7px] pr-[23px] pb-[23px] pl-[7px] font-['DejaVu_Sans','Noto_Sans_CJK_SC',sans-serif] text-[11px] text-[#3c3b37]">
      <Gradients />
      <div className="flex h-full flex-col bg-[#efebe4] shadow-[7px_7px_12px_rgba(0,0,0,0.85)]">
        {/* title and menus */}
        <header className="bg-[#3c3b37] text-[13px] text-[#dfdbd2]">
          <div className="flex h-7 items-center bg-linear-to-b from-[#5d5c57] to-[#3c3b37] pl-[11px]">
            <div className="flex h-[18px] items-center gap-[5px] rounded-full bg-linear-to-b from-[#23221f] to-[#6a6963] px-0.5">
              <button type="button" aria-label="关闭" className="flex size-[15px] items-center justify-center rounded-full bg-linear-to-b from-[#f79a73] to-[#e2562a]">
                <svg viewBox="0 0 9 9" className="size-[9px]" fill="none" stroke="#5a2a18" strokeWidth="1.500">
                  <path d="M1.500 1.500l6 6M7.500 1.500l-6 6" />
                </svg>
              </button>
              <button type="button" aria-label="最小化" className="flex size-[15px] items-center justify-center rounded-full bg-linear-to-b from-white to-[#cfcac0]">
                <svg viewBox="0 0 9 9" className="size-[9px]" fill="none" stroke="#55534d" strokeWidth="1.500">
                  <path d="M1 3l3.500 3.500L8 3" />
                </svg>
              </button>
              <button type="button" aria-label="最大化" className="flex size-[15px] items-center justify-center rounded-full bg-linear-to-b from-white to-[#cfcac0]">
                <svg viewBox="0 0 9 9" className="size-[9px]" fill="none" stroke="#55534d" strokeWidth="1.300">
                  <path d="M2 2h5v5H2z" />
                </svg>
              </button>
            </div>
            <h1 className="ml-3 font-bold">新建文档 1 - Inkscape</h1>
          </div>
          <nav className="flex h-[26px] items-center gap-2.5 pl-[5px]">
            {menus.map((menu) => (
              <button key={menu} type="button" className="whitespace-nowrap">
                {menu}
              </button>
            ))}
          </nav>
        </header>

        <Toolbar label="命令" tools={commandTools} />
        <Toolbar label="捕捉" tools={snapTools} />

        {/* rectangle controls */}
        <div className="flex h-11 shrink-0 items-center border-t border-b border-t-[#f7f5f0] border-b-[#ddd5c4]">
          <span className="flex w-6 pl-[3px]">
            <Grip light />
          </span>
          <span className="w-[46px] font-bold">更改:</span>
          <div className="flex gap-[9px]">
            <NumberField id="w" label="宽" value="351.613" />
            <NumberField id="h" label="高" value="341.708" />
            <NumberField id="rx" label="Rx" value="0.000" wide minDim />
            <NumberField id="ry" label="Ry" value="0.000" wide minDim />
          </div>
          <Combo label="单位" value="px" className="h-8 w-13" />
          <div className="ml-0.5">
            <Separator />
          </div>
          <button type="button" aria-label="去除圆角" className="ml-1.5">
            <Icon>
              <path d="M6 2h11v11h-3V8c0-2-1-3-3-3H6z" fill="#cfcbc2" />
              <path d="M1 2.500h15.500V17" stroke="#a8a49b" strokeDasharray="2 1" />
            </Icon>
          </button>
          <StyleIndicator className="ml-auto w-[117px]" row="h-[22px] leading-[22px]" label="w-7" yellow="w-16" red="w-[53px]" />
        </div>

        <div className="flex min-h-0 flex-1">
          {/* toolbox */}
          <aside className="flex w-[42px] shrink-0 flex-col items-center">
            <span className="flex h-4 items-start pt-0.5">
              <Grip vertical light />
            </span>
            <div className="flex flex-col gap-0.5">
              {drawTools.map((tool) => (
                <ToolButton key={tool.label} tool={tool} big />
              ))}
            </div>
            <button type="button" aria-label="更多工具" className="mt-3.5 p-1 text-[#8a867d]">
              <Arrow dir="right" className="size-2" />
            </button>
          </aside>

          {/* rulers, canvas and scroll bar */}
          <main className="flex min-w-0 flex-1 flex-col">
            <div className="pl-[15px]">
              <HorizontalRuler />
            </div>
            <div className="flex min-h-0 flex-1">
              <VerticalRuler />
              <Canvas />
            </div>
            <div className="flex h-5 items-center pl-[15px] text-[#6b675f]">
              <button type="button" aria-label="向左滚动" className="flex w-5 justify-center">
                <Arrow dir="left" className="size-[6px]" />
              </button>
              <div className="flex h-4 flex-1 rounded-full border-t border-[#cabda9] bg-linear-to-b from-[#ddd4c5] to-[#f8f6f2]">
                <span className="flex-[40_1_0%]" />
                <span className={clsx(thumbH, "flex-[819_1_0%]")}>
                  <Grip vertical />
                </span>
                <span className="flex-[40_1_0%]" />
              </div>
              <button type="button" aria-label="向右滚动" className="flex w-5 justify-center">
                <Arrow dir="right" className="size-[6px]" />
              </button>
            </div>
          </main>

          <div className="flex w-[18px] shrink-0 flex-col items-center pl-0.5 text-[#6b675f]">
            <button type="button" aria-label="随窗口缩放" className="flex h-5 items-center">
              <svg viewBox="0 0 12 12" className="size-3" fill="none" stroke="#4a4843">
                <circle cx="5" cy="5" r="4.300" strokeWidth="1.300" />
                <path d="M8 8l3.500 3.500" strokeWidth="2" />
                <path d="M4 3.500h1.500V7.500" strokeWidth="1.300" />
              </svg>
            </button>
            <button type="button" aria-label="向上滚动" className="flex h-5 items-center">
              <Arrow dir="up" className="size-[6px]" />
            </button>
            <div className="flex w-4 flex-1 flex-col rounded-full border-l border-[#cabda9] bg-linear-to-r from-[#ddd4c5] to-[#f8f6f2]">
              <span className="flex-[137_1_0%]" />
              <span className="flex flex-[127_1_0%] items-center justify-center rounded-full border border-[#b8a98f] bg-linear-to-r from-white via-[#f6f3ee] to-[#dfd7c9]">
                <Grip />
              </span>
              <span className="flex-[137_1_0%]" />
            </div>
            <button type="button" aria-label="向下滚动" className="flex h-5 items-center">
              <Arrow dir="down" className="size-[6px]" />
            </button>
            <button type="button" aria-label="色彩管理" className="flex h-5 items-center">
              <svg viewBox="0 0 12 12" className="size-3">
                <path d="M2 0c4 1 7 3 9.500 7.500L2 11.500c-2-3-1-8 0-11.500z" fill="#bdbdb6" />
                <path d="M3 2c3 1 5 3 6 5L3 8z" fill="#dfe3da" />
              </svg>
            </button>
          </div>
          <div className="flex w-2.5 shrink-0 items-center justify-between border-r-2 border-[#ddd5c6] pl-0.5">
            <Grip light />
          </div>
        </div>

        {/* palette */}
        <div className="flex shrink-0">
          <div className="flex h-[18px] flex-1 border border-[#cfc3b0]">
            <button type="button" aria-label="无" className="w-2 bg-white">
              <svg viewBox="0 0 8 16" className="h-4 w-2" fill="none" stroke="#7a1515" strokeWidth="1.200">
                <path d="M0 0l8 16M8 0L0 16" />
              </svg>
            </button>
            {palette.map((color, i) => (
              <button
                key={i}
                type="button"
                aria-label={`#${color}`}
                className={i < palette.length - 1 ? "w-2 shrink-0" : "min-w-0 flex-1"}
                style={{ backgroundColor: `#${color}` }}
              />
            ))}
          </div>
          <button type="button" aria-label="调色板菜单" className="flex w-3 items-center justify-center pb-1.5 text-[#7a766d]">
            <Arrow dir="left" className="size-2" />
          </button>
        </div>
        <div className="flex h-4 shrink-0 items-center text-[#6b675f]">
          <button type="button" aria-label="调色板向左" className="flex w-5 justify-center text-[#c3b9a6]">
            <Arrow dir="left" className="size-[6px]" />
          </button>
          <div className="flex h-4 flex-1 rounded-full bg-linear-to-b from-[#ddd4c5] to-white">
            <span className={clsx(thumbH, "flex-[284_1_0%]")}>
              <Grip vertical />
            </span>
            <span className="flex-[688_1_0%]" />
          </div>
          <button type="button" aria-label="调色板向右" className="flex w-8 items-center pl-2">
            <Arrow dir="right" className="size-[6px]" />
          </button>
        </div>

        {/* status bar */}
        <footer className="flex h-[27px] shrink-0 items-center pl-0.5">
          <StyleIndicator className="w-[124px]" row="h-[13px] leading-[13px]" label="w-[30px]" yellow="w-[89px]" red="w-[78px]" />
          <label htmlFor="opacity" className="w-[15px]">
            O:
          </label>
          <div className="flex h-5">
            <input id="opacity" defaultValue="100" className="w-[25px] rounded-l border border-[#b5a894] bg-white pr-1 pl-[3px] outline-none" />
            <Stepper label="不透明度" maxDim />
          </div>
          <Separator />
          <div className="flex flex-1 items-center gap-1.5">
            <button type="button" aria-label="图层可见">
              <svg viewBox="0 0 14 12" className="h-3 w-3.5" fill="none" stroke="#000">
                <path d="M.5 6.500C3 2.500 10 2 13.500 6.500 10 10 4 10 .5 6.500z" fill="#fff" />
                <circle cx="7" cy="6" r="2.300" fill="#000" />
                <path d="M2 3.500L1 2M5 2.500l-.5-2M9 2.500l.5-2M12 3.500L13 2M3 9l-1 1.500M7 9.500v2M11 9l1 1.500" strokeWidth="0.800" />
              </svg>
            </button>
            <button type="button" aria-label="锁定图层">
              <svg viewBox="0 0 12 12" className="size-3" fill="none" stroke="#222">
                <path d="M3.500 3.500C3.500 0 8.500 0 9 3v3" strokeWidth="1.200" />
                <path d="M1.500 6h8v5.500h-8z" fill="#fffbe0" />
                <path d="M7 7h2v4H7z" fill="#f5d94e" stroke="none" />
                <path d="M5.500 7.500v2" strokeWidth="1.200" />
              </svg>
            </button>
            <Combo label="图层" value="•Layer 1" className="h-[25px] w-[91px]" bold />
          </div>
          <div className="flex h-full border-l border-[#ddd5c6] pl-px leading-[13px]">
            <div className="w-[13px]">
              <div>X:</div>
              <div>Y:</div>
            </div>
            <div className="text-right font-['DejaVu_Sans_Mono',monospace] text-[12px]">
              <div>1191.03</div>
              <div>133.71</div>
            </div>
          </div>
          <label htmlFor="zoom" className="ml-2 w-[15px]">
            Z:
          </label>
          <div className="flex h-[19px]">
            <input id="zoom" defaultValue="40%" className="w-[46px] bg-white text-center outline-none" />
            <Stepper label="缩放" />
          </div>
          <svg viewBox="0 0 12 12" className="ml-[7px] size-3 shrink-0 self-end" fill="#d2c9b6" aria-hidden="true">
            <path d="M9 1h1v1H9zM9 4h1v1H9zM6 4h1v1H6zM9 7h1v1H9zM6 7h1v1H6zM3 7h1v1H3zM9 10h1v1H9zM6 10h1v1H6zM3 10h1v1H3zM0 10h1v1H0z" />
          </svg>
        </footer>
      </div>
    </div>
  );
}
